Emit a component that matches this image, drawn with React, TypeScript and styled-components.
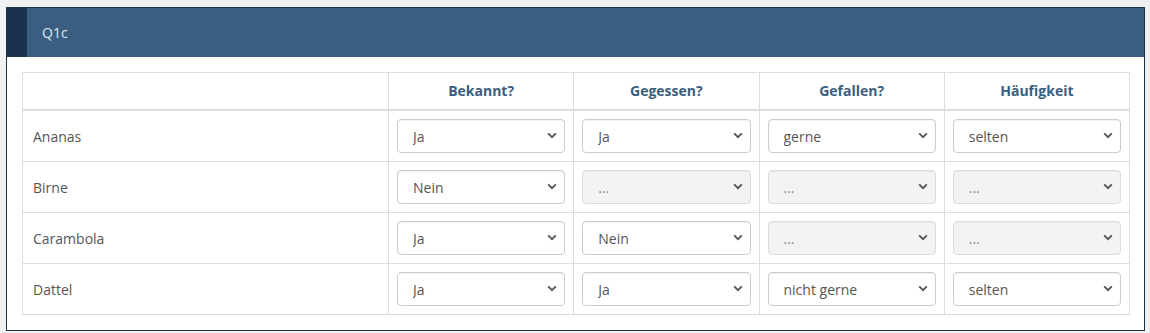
import styled, { createGlobalStyle } from "styled-components";

const GlobalStyle = createGlobalStyle`
  html, body {
    margin: 0;
    padding: 0;
    background: #eff1f3;
    font-family: "Open Sans", "Liberation Sans", sans-serif;
    font-size: 14px;
    color: #555;
  }
`;

const Page = styled.div`
  padding: 7px 5px 0 6px;
`;

const Panel = styled.section`
  width: 1139px;
  box-sizing: border-box;
  border: 1px solid #1b3150;
  background: #fff;
`;

const PanelHeader = styled.header`
  display: flex;
  align-items: center;
  height: 49px;
  background: #3a5e80;
  border-left: 20px solid #1b3150;
  padding-left: 15px;
  color: #dce8f3;
  font-size: 14px;
`;

const PanelBody = styled.div`
  padding: 15px 14px 15px 15px;
`;

const Table = styled.table`
  width: 1108px;
  border-collapse: collapse;
  table-layout: fixed;
  border: 1px solid #ddd;
`;

const HeadCell = styled.th`
  border: 1px solid #ddd;
  border-bottom: 2px solid #ddd;
  color: #3a5e80;
  font-weight: 700;
  font-size: 14px;
  line-height: 20px;
  text-align: center;
  padding: 8px 8px;
`;

const LabelCell = styled.td`
  border: 1px solid #ddd;
  padding: 0 10px;
  color: #555;
`;

const FieldCell = styled.td`
  border: 1px solid #ddd;
  padding: 8px 8px;
`;

const SelectWrap = styled.div`
  position: relative;
  height: 34px;
`;

const Select = styled.select<{ $disabled?: boolean }>`
  display: block;
  appearance: none;
  -webkit-appearance: none;
  width: 100%;
  height: 34px;
  margin: 0;
  box-sizing: border-box;
  border: 1px solid #ccc;
  border-radius: 4px;
  background: ${(p) => (p.$disabled ? "#eee" : "#fff")};
  color: #555;
  font-family: "Open Sans", "Liberation Sans", sans-serif;
  font-size: 14px;
  padding: 0 28px 0 15px;
  box-shadow: inset 0 1px 1px rgba(0, 0, 0, 0.06);
  outline: none;
`;

const Chevron = styled.svg`
  position: absolute;
  right: 8px;
  top: 13px;
  width: 10px;
  height: 7px;
  pointer-events: none;
`;

type Cell = { value: string; disabled?: boolean };

const columns = ["Bekannt?", "Gegessen?", "Gefallen?", "Häufigkeit"];

const rows: { label: string; cells: Cell[] }[] = [
  {
    label: "Ananas",
    cells: [{ value: "Ja" }, { value: "Ja" }, { value: "gerne" }, { value: "selten" }],
  },
  {
    label: "Birne",
    cells: [
      { value: "Nein" },
      { value: "...", disabled: true },
      { value: "...", disabled: true },
      { value: "...", disabled: true },
    ],
  },
  {
    label: "Carambola",
    cells: [
      { value: "Ja" },
      { value: "Nein" },
      { value: "...", disabled: true },
      { value: "...", disabled: true },
    ],
  },
  {
    label: "Dattel",
    cells: [{ value: "Ja" }, { value: "Ja" }, { value: "nicht gerne" }, { value: "selten" }],
  },
];

function Dropdown({ value, disabled }: Cell) {
  return (
    <SelectWrap>
      <Select $disabled={disabled} disabled={disabled} defaultValue={value}>
        <option value={value}>{value}</option>
      </Select>
      <Chevron viewBox="0 0 10 7">
        <path d="M1.2 1.3 L5 5.1 L8.8 1.3" fill="none" stroke="#555" strokeWidth="1.9" />
      </Chevron>
    </SelectWrap>
  );
}

export default function App() {
  return (
    <Page>
      <GlobalStyle />
      <Panel>
        <PanelHeader>Q1c</PanelHeader>
        <PanelBody>
          <Table>
            <colgroup>
              <col style={{ width: 366 }} />
              <col />
              <col />
              <col />
              <col />
            </colgroup>
            <thead>
              <tr>
                <HeadCell />
                {columns.map((c) => (
                  <HeadCell key={c}>{c}</HeadCell>
                ))}
              </tr>
            </thead>
            <tbody>
              {rows.map((r) => (
                <tr key={r.label}>
                  <LabelCell>{r.label}</LabelCell>
                  {r.cells.map((c, i) => (
                    <FieldCell key={i}>
                      <Dropdown {...c} />
                    </FieldCell>
                  ))}
                </tr>
              ))}
            </tbody>
          </Table>
        </PanelBody>
      </Panel>
    </Page>
  );
}
